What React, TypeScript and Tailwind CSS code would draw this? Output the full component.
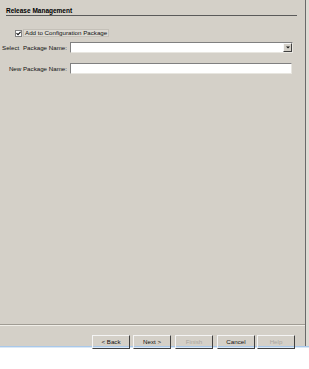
export default function App() {
  const font = { fontFamily: '"Liberation Sans", Arial, sans-serif' };
  return (
    <div className="w-[309px] h-[369px] bg-white overflow-hidden" style={font}>
      <div className="flex h-[346px]">
        <div className="w-[305px] h-full bg-[#d4d0c8] flex flex-col">
          {/* Header */}
          <div className="pl-[6px] pt-[7px] pr-[8px]">
            <div className="text-[6.5px] leading-[7px] font-bold text-black pb-[1px] border-b border-[#5a5a5a]">
              Release Management
            </div>
          </div>

          {/* Checkbox row */}
          <div className="flex items-center mt-[13px] pl-[15px] h-[8px]">
            <div className="w-[7px] h-[7px] bg-white border border-[#808080] flex items-center justify-center">
              <svg width="5" height="5" viewBox="0 0 5 5">
                <path d="M0.5 2.2 L2 3.7 L4.6 0.8" stroke="#111" strokeWidth="1.1" fill="none" />
              </svg>
            </div>
            <div className="ml-[1px] px-[1px] border border-[#c4c0b8] bg-[#dcd9d2] text-[6.2px] leading-[6px] text-[#111]">
              Add to Configuration Package
            </div>
          </div>

          {/* Package name select */}
          <div className="flex items-center mt-[5px] h-[11px]">
            <div className="w-[68px] flex items-center text-[6.2px] text-[#111]">
              <span className="pl-[2px]">Select</span>
              <span className="ml-auto pr-[1px]">Package Name:</span>
            </div>
            <div className="ml-[2px] w-[223px] h-[11px] bg-white border-t border-l border-[#808080] border-b border-r border-b-[#e8e6e0] border-r-[#e8e6e0] flex justify-end items-stretch">
              <div className="w-[9px] bg-[#d4d0c8] border border-t-[#f8f8f8] border-l-[#f8f8f8] border-b-[#404040] border-r-[#404040] flex items-center justify-center">
                <svg width="4" height="3" viewBox="0 0 4 3">
                  <path d="M0 0.5 H4 L2 2.5 Z" fill="#111" />
                </svg>
              </div>
            </div>
          </div>

          {/* New package name */}
          <div className="flex items-center mt-[10px] h-[11px]">
            <div className="w-[68px] text-right pr-[1px] text-[6.2px] text-[#111]">New Package Name:</div>
            <div className="ml-[2px] w-[222px] h-[11px] bg-white border-t border-l border-[#808080] border-b border-r border-b-[#e8e6e0] border-r-[#e8e6e0]" />
          </div>

          <div className="flex-1" />

          {/* Separator */}
          <div className="border-t border-[#a09c94] border-b border-b-[#f0eee8]" />

          {/* Buttons */}
          <div className="flex items-start pt-[9px] pl-[92px] h-[20px]">
            <WizButton label="< Back" />
            <WizButton label="Next >" className="ml-[3px]" />
            <WizButton label="Finish" disabled className="ml-[4px]" />
            <WizButton label="Cancel" className="ml-[4px]" />
            <WizButton label="Help" disabled className="ml-[2px]" />
          </div>
        </div>
        <div className="w-[1px] h-full bg-[#6a6a6a]" />
        <div className="w-[3px] h-full bg-[#dedbd4]" />
      </div>
      <div className="h-[1px] bg-[#a9c8ea]" />
      <div className="h-[1px] bg-[#dbe8f5]" />
    </div>
  );
}

function WizButton({ label, disabled, className = '' }: { label: string; disabled?: boolean; className?: string }) {
  return (
    <div
      className={`w-[38px] h-[14px] border-t border-l border-[#f4f4f4] border-r border-r-[#404040] border-b border-b-[#404040] flex justify-center pt-[2px] text-[6.2px] leading-[7px] ${
        disabled ? 'text-[#a8a6a0]' : 'text-[#111]'
      } ${className}`}
    >
      {label}
    </div>
  );
}
